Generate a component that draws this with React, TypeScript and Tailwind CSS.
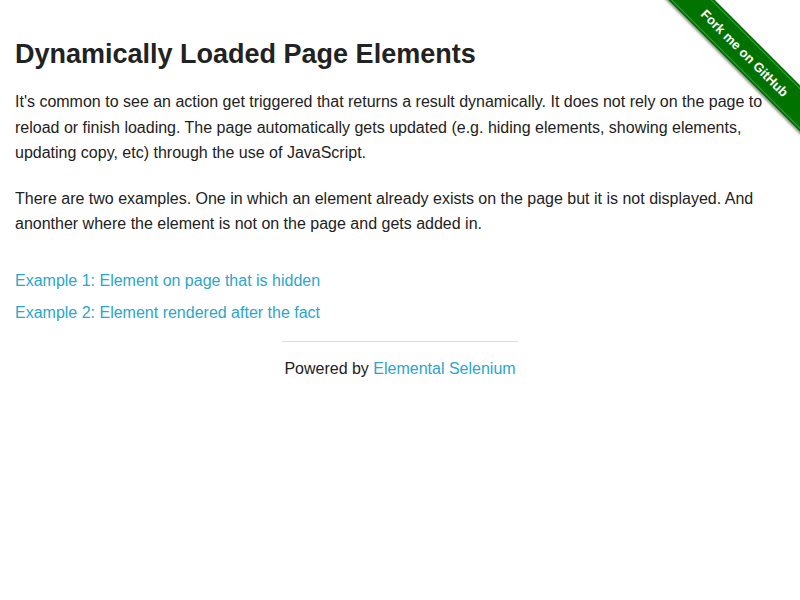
import React from "react";

export default function App() {
  return (
    <div className="relative min-h-[600px] bg-white pt-[35px] font-['Liberation_Sans',Arial,sans-serif] text-[#222222]">
      <div className="px-[15px]">
        <h3 className="mb-[16px] text-[27px] font-bold leading-[38px]">
          Dynamically Loaded Page Elements
        </h3>
        <p className="mb-[20px] text-[16px] leading-[25.6px]">
          It's common to see an action get triggered that returns a result dynamically. It does not rely on the page to
          reload or finish loading. The page automatically gets updated (e.g. hiding elements, showing elements,
          updating copy, etc) through the use of JavaScript.
        </p>
        <p className="text-[16px] leading-[25.6px]">
          There are two examples. One in which an element already exists on the page but it is not displayed. And
          anonther where the element is not on the page and gets added in.
        </p>
        <div className="mt-[28px] flex flex-col text-[16px] leading-[32px]">
          <div>
            <a href="#" className="text-[#2ba6cb]">Example 1: Element on page that is hidden</a>
          </div>
          <div>
            <a href="#" className="text-[#2ba6cb]">Example 2: Element rendered after the fact</a>
          </div>
        </div>
      </div>
      <div className="mx-auto mt-[12px] w-[266.67px] px-[15px]">
        <div className="h-px w-full bg-[#dddddd]" />
        <div className="mt-[14px] text-center text-[16px] leading-[25.6px]">
          Powered by <a href="#" className="text-[#2ba6cb]">Elemental Selenium</a>
        </div>
      </div>
      <a href="#" className="absolute right-0 top-0 block h-[149px] w-[149px] overflow-hidden">
        <div className="absolute left-[-5.25px] top-[37.75px] flex h-[33px] w-[200px] rotate-45 items-center justify-center bg-[#007200] shadow-[0_2px_2px_rgba(0,0,0,0.35)]">
          <div className="absolute inset-x-0 top-[2px] h-px bg-[#3c9a3c]" />
          <div className="absolute inset-x-0 bottom-[2px] h-px bg-[#3c9a3c]" />
          <span className="pr-[4px] font-['Liberation_Sans',Arial,sans-serif] text-[13px] font-bold text-white">
            Fork me on GitHub
          </span>
        </div>
      </a>
    </div>
  );
}
